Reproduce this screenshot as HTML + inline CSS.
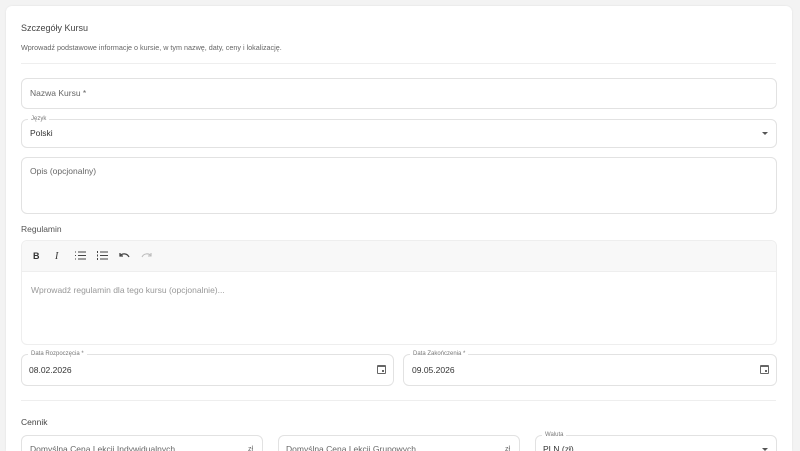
<!DOCTYPE html>
<html style="width:800px;height:451px;overflow:hidden"><head><meta charset="utf-8"><style>
*{box-sizing:border-box;margin:0;padding:0}
body{width:800px;height:451px;overflow:hidden;background:#f3f3f3;font-family:"Liberation Sans",sans-serif;color:#333;position:relative}
.card{position:absolute;left:6px;top:6px;width:786px;height:445px;background:#fff;border-radius:6px 6px 0 0;box-shadow:0 0 2px rgba(0,0,0,.08)}
.a{position:absolute}
.f{position:absolute;border:1px solid #e2e2e2;border-radius:6px;background:#fff}
.t{position:absolute;font-size:9px;color:#333}
.lbl{position:absolute;font-size:6px;color:#777;background:#fff;padding:0 3px;top:-4px;left:6px;line-height:7px}
.ph{position:absolute;font-size:8.5px;color:#666}
.cal{position:absolute;width:9px;height:9px;border:1.3px solid #666;border-top-width:2px;border-radius:1px}
.cal:after{content:"";position:absolute;right:1px;bottom:1px;width:2px;height:2px;background:#666}
.arr{position:absolute;width:0;height:0;border-left:3.5px solid transparent;border-right:3.5px solid transparent;border-top:3.5px solid #555}
</style></head><body>
<div class="card"></div>
<div class="t" style="left:21px;top:23px;font-size:9px;color:#444">Szczegóły Kursu</div>
<div class="t" style="left:21px;top:43px;font-size:7.2px;color:#666">Wprowadź podstawowe informacje o kursie, w tym nazwę, daty, ceny i lokalizację.</div>
<div class="a" style="left:21px;top:63px;width:755px;border-top:1px solid #eee"></div>

<div class="f" style="left:21px;top:78px;width:756px;height:31px"><div class="ph" style="left:8px;top:9px">Nazwa Kursu *</div></div>
<div class="f" style="left:21px;top:119px;width:756px;height:29px"><div class="lbl">Język</div><div class="t" style="left:8px;top:8px;font-size:8.5px">Polski</div><div class="arr" style="left:740px;top:12px"></div></div>
<div class="f" style="left:21px;top:157px;width:756px;height:57px"><div class="ph" style="left:8px;top:8px">Opis (opcjonalny)</div></div>

<div class="t" style="left:21px;top:224px;font-size:8.5px;color:#555">Regulamin</div>
<div class="f" style="left:21px;top:240px;width:756px;height:105px;border-color:#eee">
 <div class="a" style="left:0;top:0;width:754px;height:31px;background:#f8f8f8;border-bottom:1px solid #eee;border-radius:6px 6px 0 0"></div>
 <div class="t" style="left:11px;top:10px;font-weight:bold;font-size:9px">B</div>
 <div class="t" style="left:33px;top:10px;font-style:italic;font-family:'Liberation Serif',serif;font-size:10px">I</div>
 <svg class="a" style="left:53px;top:10px" width="11" height="9" viewBox="0 0 11 9" fill="none" stroke="#444" stroke-width="1"><path d="M0 1h1M0 4.5h1M0 8h1M3 1h8M3 4.5h8M3 8h8"/></svg>
 <svg class="a" style="left:75px;top:10px" width="11" height="9" viewBox="0 0 11 9" fill="none" stroke="#444" stroke-width="1"><path d="M0.5 0v2M0.5 3.5v2M0.5 7v2M3 1h8M3 4.5h8M3 8h8"/></svg>
 <svg class="a" style="left:97px;top:11px" width="11" height="7" viewBox="0 0 11 7" fill="none" stroke="#444" stroke-width="1.3"><path d="M1 1v3h3M1 4C3 1 8 1 10 5"/></svg>
 <svg class="a" style="left:119px;top:11px" width="11" height="7" viewBox="0 0 11 7" fill="none" stroke="#bbb" stroke-width="1.1"><path d="M10 1v3H7M10 4C8 1 3 1 1 5"/></svg>
 <div class="ph" style="left:9px;top:44px;color:#999">Wprowadź regulamin dla tego kursu (opcjonalnie)...</div>
</div>

<div class="f" style="left:21px;top:354px;width:373px;height:32px"><div class="lbl">Data Rozpoczęcia *</div><div class="t" style="left:7px;top:10px;font-size:8.5px">08.02.2026</div><div class="cal" style="left:355px;top:10px"></div></div>
<div class="f" style="left:403px;top:354px;width:374px;height:32px"><div class="lbl">Data Zakończenia *</div><div class="t" style="left:8px;top:10px;font-size:8.5px">09.05.2026</div><div class="cal" style="left:356px;top:10px"></div></div>
<div class="a" style="left:21px;top:400px;width:755px;border-top:1px solid #eee"></div>

<div class="t" style="left:21px;top:417px;font-size:8.5px;color:#444">Cennik</div>
<div class="f" style="left:21px;top:435px;width:242px;height:30px"><div class="ph" style="left:8px;top:8px">Domyślna Cena Lekcji Indywidualnych</div><div class="ph" style="left:226px;top:10px;font-size:7px">zł</div></div>
<div class="f" style="left:278px;top:435px;width:242px;height:30px"><div class="ph" style="left:7px;top:8px">Domyślna Cena Lekcji Grupowych</div><div class="ph" style="left:226px;top:10px;font-size:7px">zł</div></div>
<div class="f" style="left:535px;top:435px;width:242px;height:30px"><div class="lbl">Waluta</div><div class="t" style="left:7px;top:8px;font-size:8.5px">PLN (zł)</div><div class="arr" style="left:226px;top:12px"></div></div>
</body></html>
